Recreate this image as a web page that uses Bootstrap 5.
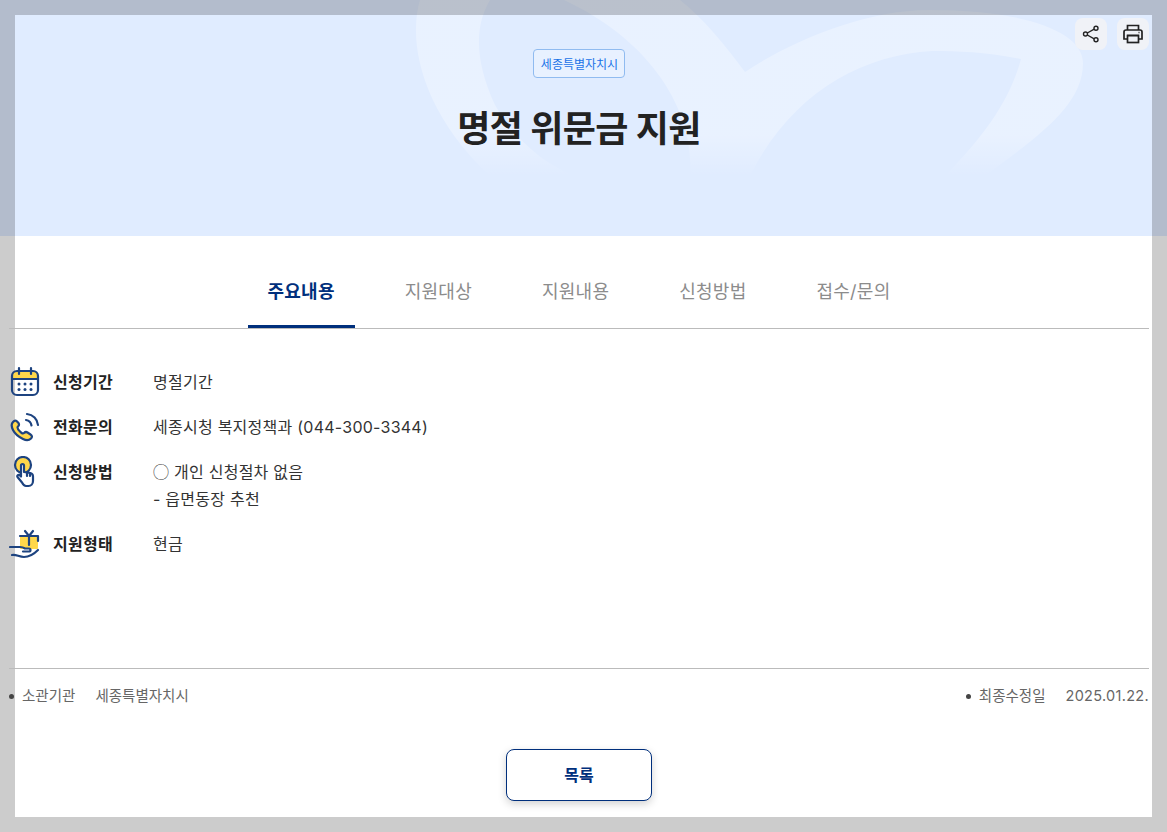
<!DOCTYPE html>
<html lang="ko">

<head>
    <meta charset="UTF-8" />
    <meta name="viewport" content="width=device-width, initial-scale=1.0" />
    <title>명절 위문금 지원</title>
    <link rel="stylesheet" href="https://cdn.jsdelivr.net/npm/bootstrap@5.3.3/dist/css/bootstrap.min.css">
    <style>
        body {
            background: #ccc;
            font-family: Inter, "Noto Sans CJK KR", sans-serif;
            color: #222;
            height: 832px;
            overflow: hidden;
        }

        .hero-band {
            background: #e0ecff;
            height: 236px;
            padding: 15px 15px 0;
            overflow: hidden;
        }

        .hero-swirl {
            position: absolute;
            top: 0;
            left: 0;
        }

        .hero-panel {
            height: 221px;
            box-shadow: 0 0 0 40px rgba(0, 0, 0, .2);
        }

        .inner-wide {
            width: 1140px;
            margin-left: -6px;
        }

        .tool-row {
            gap: 10px;
            padding-top: 3px;
        }

        .tool-btn {
            width: 32px;
            height: 32px;
            border-radius: 8px;
            background: #f0f2f7;
            border: 0;
            padding: 0;
        }

        .org-tag {
            font-size: 12px;
            line-height: 29px;
            height: 29px;
            padding: 0 6px 0 7px;
            color: #1a73e8;
            background: #e8f1ff;
            border: 1px solid #90bbf0;
            border-radius: 4px;
            margin-top: -1px;
        }

        .hero-title {
            font-size: 36px;
            font-weight: 700;
            letter-spacing: -.6px;
            line-height: 50px;
            margin: 26px 0 0;
            color: #222;
        }

        .sheet {
            background: #fff;
            margin: 0 15px;
            height: 581px;
        }

        .tab-bar {
            height: 93px;
            border-bottom: 1px solid #bbb;
            gap: 30px;
        }

        .tab-bar .nav-link {
            font-size: 18px;
            line-height: 26px;
            padding: 43px 20px 19px;
            color: #8c8c8c;
            border-bottom: 3px solid transparent;
            height: 92px;
            letter-spacing: .25px;
        }

        .tab-bar .nav-link.active {
            color: #002f7c;
            font-weight: 700;
            border-bottom-color: #002f7c;
        }

        .info-list {
            padding-top: 40px;
            height: 339px;
            margin: 0;
        }

        .info-row {
            margin-bottom: 18px;
            font-size: 16px;
            line-height: 27px;
            letter-spacing: .25px;
        }

        .info-icon {
            width: 32px;
            height: 32px;
            flex: none;
            margin: -3px 12px -2px 0;
        }

        .info-label {
            width: 100px;
            flex: none;
            font-weight: 700;
            margin: 0;
        }

        .info-value {
            margin: 0;
            color: #333;
        }

        .circle-mark {
            font-family: "Noto Sans CJK KR", sans-serif;
            line-height: 1;
        }

        .meta-bar {
            border-top: 1px solid #bbb;
            height: 81px;
            padding-top: 15px;
            font-size: 14.5px;
            line-height: 24px;
            color: #666;
        }

        .meta-dot {
            width: 5px;
            height: 5px;
            border-radius: 50%;
            background: #444;
            margin-right: 8px;
        }

        .meta-key {
            margin-right: 20px;
        }

        .meta-date {
            letter-spacing: .3px;
        }

        .list-btn {
            width: 146px;
            height: 52px;
            font-size: 16px;
            font-weight: 700;
            color: #002f7c;
            background: #fff;
            border: 1px solid #002f7c;
            border-radius: 8px;
            box-shadow: 0 3px 8px rgba(0, 0, 0, .18);
        }
    </style>
</head>

<body>

    <header class="hero-band position-relative">
        <svg class="hero-swirl" width="1167" height="236" viewBox="0 0 1167 236">
            <defs>
                <linearGradient id="swirlFade" gradientUnits="userSpaceOnUse" x1="0" y1="135" x2="0" y2="176">
                    <stop offset="0" stop-color="#fff" stop-opacity=".3" />
                    <stop offset="1" stop-color="#fff" stop-opacity="0" />
                </linearGradient>
            </defs>
            <path fill="url(#swirlFade)" fill-rule="evenodd" d="M420 0C408 40 420 110 490 176L985 176C1040 135 1083 105 1083 63C1083 30 1020 10 930 10C860 10 785 45 745 72C725 45 705 20 680 0Z
                M490 0C475 25 474 60 495 105C515 140 545 165 575 176L690 176C695 110 650 40 564 0Z
                M945 176C985 135 1010 100 1021 59C985 52 960 51 932 51C860 55 790 95 750 176Z" />
        </svg>
        <div class="hero-panel position-relative">
            <div class="inner-wide">
                <div class="tool-row d-flex justify-content-end">
                    <button class="tool-btn d-flex align-items-center justify-content-center" type="button" aria-label="공유">
                        <svg width="20" height="20" viewBox="0 0 20 20" fill="none" stroke="#222" stroke-width="1.4">
                            <circle cx="15" cy="4.2" r="2" />
                            <circle cx="4.5" cy="10" r="2" />
                            <circle cx="15" cy="15.8" r="2" />
                            <path d="M13.2 5.2 6.3 9M6.3 11l6.9 3.8" />
                        </svg>
                    </button>
                    <button class="tool-btn d-flex align-items-center justify-content-center" type="button" aria-label="인쇄">
                        <svg width="22" height="22" viewBox="0 0 22 22" fill="none" stroke="#222" stroke-width="1.7">
                            <path d="M5.5 7V2.5h11V7" />
                            <path d="M5.5 16H2V9a2 2 0 0 1 2-2h14a2 2 0 0 1 2 2v7h-3.500" />
                            <rect x="5.500" y="12.500" width="11" height="7" />
                            <path d="M5 12.500h12M16.500 9.500h1" />
                        </svg>
                    </button>
                </div>
                <div class="d-flex flex-column align-items-center">
                    <span class="org-tag">세종특별자치시</span>
                    <h1 class="hero-title">명절 위문금 지원</h1>
                </div>
            </div>
        </div>
    </header>

    <main class="sheet">
        <div class="inner-wide">
            <nav class="nav tab-bar justify-content-center">
                <a class="nav-link active" href="#">주요내용</a>
                <a class="nav-link" href="#">지원대상</a>
                <a class="nav-link" href="#">지원내용</a>
                <a class="nav-link" href="#">신청방법</a>
                <a class="nav-link" href="#">접수/문의</a>
            </nav>

            <div class="info-list">
                <div class="info-row d-flex">
                    <svg class="info-icon" viewBox="0 0 32 32" fill="none" stroke="#1d4380" stroke-width="2.200" stroke-linecap="round">
                        <path d="M3 13V9a4 4 0 0 1 4-4h18a4 4 0 0 1 4 4v4z" fill="#ffd74a" stroke="none" />
                        <rect x="3" y="5" width="26" height="24" rx="5" />
                        <path d="M3 13h26M10 2v6M22 2v6" />
                        <g fill="#1d4380" stroke="none">
                            <circle cx="10" cy="18" r="1.500" /><circle cx="16" cy="18" r="1.500" /><circle cx="22" cy="18" r="1.500" />
                            <circle cx="10" cy="23.500" r="1.500" /><circle cx="16" cy="23.500" r="1.500" /><circle cx="22" cy="23.500" r="1.500" />
                        </g>
                    </svg>
                    <p class="info-label">신청기간</p>
                    <p class="info-value">명절기간</p>
                </div>
                <div class="info-row d-flex">
                    <svg class="info-icon" viewBox="0 0 32 32" fill="none" stroke="#1d4380" stroke-width="2.200" stroke-linecap="round">
                        <path d="M4 11c-2 2-2 4 0 8s6 7 10 9c3 1.500 6 1.500 8-.5 1.500-1.500 1-3-.5-4l-3-2c-1.500-1-2.500-.5-3.500.5-1 1-2 .5-4-1.500s-3-4-2-5c1-1 1.500-2 .5-3.500L7.500 10C6.500 9 5 10 4 11z" fill="#ffd74a" />
                        <path d="M17 9c3 .5 5 2.500 5.500 5.500M18 3c6 .5 10.500 5 11 11" />
                    </svg>
                    <p class="info-label">전화문의</p>
                    <p class="info-value">세종시청 복지정책과 (044-300-3344)</p>
                </div>
                <div class="info-row d-flex">
                    <svg class="info-icon" viewBox="0 0 32 32" fill="none" stroke="#1d4380" stroke-width="2.200" stroke-linecap="round" stroke-linejoin="round">
                        <circle cx="14" cy="9" r="8" fill="#ffd74a" />
                        <path d="M13 26.500 8.500 21c-1-1.500 1-3 2.500-1.500l1 1V9.500c0-2 3-2 3 0V16l6 1c2 .3 3 1.500 3 3.500V25c0 3-2 5-4.500 5H17c-1.500 0-3-1.500-4-3.500z" fill="#fff" />
                        <path d="M18 16v4M21 17v3" />
                    </svg>
                    <p class="info-label">신청방법</p>
                    <p class="info-value"><span class="circle-mark">◯</span> 개인 신청절차 없음<br>- 읍면동장 추천</p>
                </div>
                <div class="info-row d-flex">
                    <svg class="info-icon" viewBox="0 0 32 32" fill="none" stroke="#1d4380" stroke-width="2.200" stroke-linecap="round" stroke-linejoin="round">
                        <rect x="11" y="8" width="18" height="13" rx="1" fill="#ffd74a" stroke="none" />
                        <path d="M20 8v9M11 8h18v5M20 8l-4-5M20 8l4-5" />
                        <path d="M1 19h10c2 0 3.500 .5 5 1.500h4c2 0 2 3 0 3h-6" />
                        <path d="M3 27c4-1 7 2 12 2 5 0 10-3 14-7" />
                    </svg>
                    <p class="info-label">지원형태</p>
                    <p class="info-value">현금</p>
                </div>
            </div>

            <div class="meta-bar d-flex justify-content-between">
                <div class="d-flex align-items-center align-self-start">
                    <span class="meta-dot"></span>
                    <span class="meta-key">소관기관</span>
                    <span>세종특별자치시</span>
                </div>
                <div class="d-flex align-items-center align-self-start">
                    <span class="meta-dot"></span>
                    <span class="meta-key">최종수정일</span>
                    <span class="meta-date">2025.01.22.</span>
                </div>
            </div>

            <div class="d-flex justify-content-center">
                <button class="list-btn" type="button">목록</button>
            </div>
        </div>
    </main>

    <script src="https://cdn.jsdelivr.net/npm/bootstrap@5.3.3/dist/js/bootstrap.bundle.min.js"></script>
</body>

</html>
